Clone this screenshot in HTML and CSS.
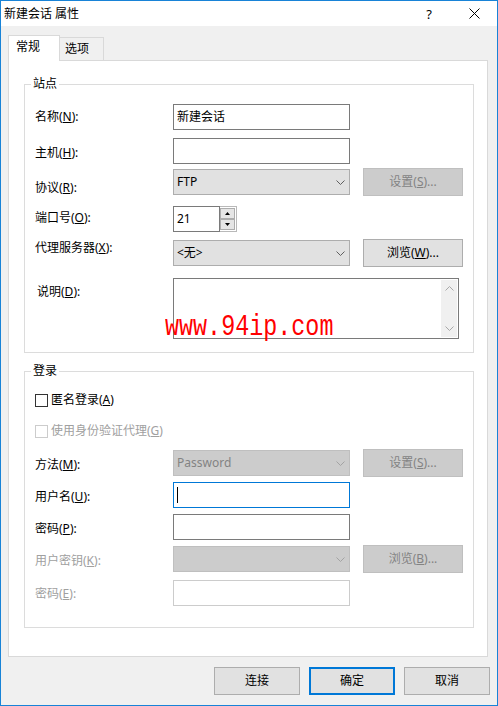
FILE: index.html
```html
<!DOCTYPE html>
<html lang="zh-CN">
<head>
<meta charset="utf-8">
<title>新建会话 属性</title>
<link rel="stylesheet" href="styles.css">
</head>
<body>
<div class="window">
  <div class="titlebar">
    <span class="title">新建会话 属性</span>
    <span class="tb-help">?</span>
    <span class="tb-close"><svg width="11" height="11" viewBox="0 0 11 11"><path d="M0.5 0.5L10.5 10.5M10.5 0.5L0.5 10.5" stroke="#000" stroke-width="1" fill="none"/></svg></span>
  </div>

  <div class="tabs">
    <div class="tab active">常规</div>
    <div class="tab">选项</div>
  </div>

  <div class="panel">
    <section class="group site">
      <div class="group-title"><span>站点</span></div>
      <div class="group-body">
        <div class="row row-name">
          <span class="lbl">名称(<u>N</u>):</span>
          <div class="field">新建会话</div>
        </div>
        <div class="row row-host">
          <span class="lbl">主机(<u>H</u>):</span>
          <div class="field"></div>
        </div>
        <div class="row row-proto">
          <span class="lbl">协议(<u>R</u>):</span>
          <div class="combo"><span>FTP</span><svg class="chev" width="9" height="5" viewBox="0 0 9 5"><path d="M0.5 0.5L4.5 4.5L8.5 0.5" stroke="#5f5f5f" fill="none"/></svg></div>
          <div class="btn disabled">设置(<u>S</u>)...</div>
        </div>
        <div class="row row-port">
          <span class="lbl">端口号(<u>O</u>):</span>
          <div class="spin">
            <div class="spin-text">21</div>
            <div class="spin-btns">
              <div class="spin-btn"><svg width="5" height="3" viewBox="0 0 5 3"><path d="M2.5 0L5 3H0Z" fill="#000"/></svg></div>
              <div class="spin-btn"><svg width="5" height="3" viewBox="0 0 5 3"><path d="M0 0H5L2.5 3Z" fill="#000"/></svg></div>
            </div>
          </div>
        </div>
        <div class="row row-proxy">
          <span class="lbl">代理服务器(<u>X</u>):</span>
          <div class="combo"><span>&lt;无&gt;</span><svg class="chev" width="9" height="5" viewBox="0 0 9 5"><path d="M0.5 0.5L4.5 4.5L8.5 0.5" stroke="#5f5f5f" fill="none"/></svg></div>
          <div class="btn">浏览(<u>W</u>)...</div>
        </div>
        <div class="row row-desc">
          <span class="lbl">说明(<u>D</u>):</span>
          <div class="textarea">
            <div class="vscroll">
              <div class="arrow"><svg width="9" height="5" viewBox="0 0 9 5"><path d="M0.5 4.5L4.5 0.5L8.5 4.5" stroke="#a8a8a8" fill="none"/></svg></div>
              <div class="arrow"><svg width="9" height="5" viewBox="0 0 9 5"><path d="M0.5 0.5L4.5 4.5L8.5 0.5" stroke="#a8a8a8" fill="none"/></svg></div>
            </div>
          </div>
        </div>
      </div>
    </section>

    <section class="group login">
      <div class="group-title"><span>登录</span></div>
      <div class="group-body">
        <div class="check check-anon"><span class="box"></span><span>匿名登录(<u>A</u>)</span></div>
        <div class="check check-proxy disabled"><span class="box"></span><span>使用身份验证代理(<u>G</u>)</span></div>
        <div class="row row-method">
          <span class="lbl">方法(<u>M</u>):</span>
          <div class="combo disabled"><span>Password</span><svg class="chev" width="9" height="5" viewBox="0 0 9 5"><path d="M0.5 0.5L4.5 4.5L8.5 0.5" stroke="#a3a3a3" fill="none"/></svg></div>
          <div class="btn disabled">设置(<u>S</u>)...</div>
        </div>
        <div class="row row-user">
          <span class="lbl">用户名(<u>U</u>):</span>
          <div class="field focus"><span class="caret"></span></div>
        </div>
        <div class="row row-pass">
          <span class="lbl">密码(<u>P</u>):</span>
          <div class="field"></div>
        </div>
        <div class="row row-key">
          <span class="lbl muted">用户密钥(<u>K</u>):</span>
          <div class="combo disabled"><span></span><svg class="chev" width="9" height="5" viewBox="0 0 9 5"><path d="M0.5 0.5L4.5 4.5L8.5 0.5" stroke="#a3a3a3" fill="none"/></svg></div>
          <div class="btn disabled">浏览(<u>B</u>)...</div>
        </div>
        <div class="row row-keypass">
          <span class="lbl muted">密码(<u>E</u>):</span>
          <div class="field disabled"></div>
        </div>
      </div>
    </section>
  </div>

  <div class="footer">
    <div class="btn">连接</div>
    <div class="btn default">确定</div>
    <div class="btn">取消</div>
  </div>

  <div class="watermark">www.94ip.com</div>
</div>
</body>
</html>
```

FILE: styles.css
```css
* { box-sizing: border-box; }
html, body { margin: 0; padding: 0; }
body {
  width: 498px;
  height: 706px;
  font-family: "Noto Sans", "Noto Sans CJK SC", sans-serif;
  font-size: 12px;
  line-height: 16px;
  color: #000;
  background: #fff;
}
u { text-decoration: underline; text-underline-offset: 1px; }

.window {
  position: relative;
  width: 498px;
  height: 706px;
  border: 1px solid #1883d7;
  background: #f0f0f0;
  display: flex;
  flex-direction: column;
  overflow: hidden;
}

.titlebar {
  height: 25px;
  flex-shrink: 0;
  background: #fff;
  display: flex;
  align-items: center;
}
.title { flex: 1; padding-left: 3px; }
.tb-help { width: 44px; text-align: center; font-size: 13px; }
.tb-close {
  width: 46px;
  height: 25px;
  display: flex;
  align-items: center;
  justify-content: center;
}

.tabs {
  height: 34px;
  flex-shrink: 0;
  display: flex;
  align-items: flex-end;
  padding: 9px 0 0 7px;
}
.tab {
  width: 45px;
  height: 23px;
  margin-left: -1px;
  padding: 3px 0 0 5px;
  border: 1px solid #d9d9d9;
  border-bottom: none;
  background: #f0f0f0;
}
.tab.active {
  position: relative;
  z-index: 1;
  width: 52px;
  height: 26px;
  margin-left: 0;
  margin-bottom: -1px;
  padding: 3px 0 0 7px;
  background: #fff;
}

.panel {
  flex-shrink: 0;
  margin: 0 9px 0 7px;
  border: 1px solid #d9d9d9;
  background: #fff;
  padding: 23px 13px 28px 15px;
}

.group { border: 1px solid #dcdcdc; }
.group + .group { margin-top: 18px; }
.group-title { height: 16px; margin: -9px 0 0 6px; }
.group-title span { background: #fff; padding: 0 2px; }
.group-body { padding-left: 10px; }
.site .group-body { padding-top: 11px; padding-bottom: 13px; }
.login .group-body { padding-top: 13px; padding-bottom: 20px; }

.row {
  display: grid;
  grid-template-columns: 125px 177px 100px;
  column-gap: 13px;
  height: 28px;
  align-items: center;
}
.lbl { align-self: start; white-space: nowrap; }
.lbl.muted { color: #a0a0a0; }

.row-name .lbl { margin-top: 6px; }
.row-host { margin-top: 6px; }
.row-host .lbl { margin-top: 8px; }
.row-proto { margin-top: 3px; }
.row-proto .lbl { margin-top: 12px; }
.row-port { margin-top: 9px; }
.row-port .lbl { margin-top: 5px; }
.row-proxy { margin-top: 6px; }
.row-proxy .lbl { margin-top: 1px; }
.row-desc {
  margin-top: 11px;
  height: 61px;
  grid-template-columns: 125px 286px;
}
.row-desc .lbl { margin-top: 6px; margin-left: 2px; }

.row-method { margin-top: 10px; }
.row-user, .row-pass, .row-key { margin-top: 4px; }
.row-keypass { margin-top: 6px; }
.row-method .lbl, .row-user .lbl, .row-pass .lbl, .row-key .lbl { margin-top: 8px; }
.row-keypass .lbl { margin-top: 7px; }

.field {
  height: 26px;
  border: 1px solid #7a7a7a;
  background: #fff;
  padding: 0 3px;
  display: flex;
  align-items: center;
}
.field.focus { border-color: #0078d7; }
.field.disabled { border-color: #cccccc; }
.caret { width: 1px; height: 16px; background: #000; }

.combo {
  height: 26px;
  border: 1px solid #adadad;
  background: #e1e1e1;
  padding: 0 4px 0 3px;
  display: flex;
  align-items: center;
  justify-content: space-between;
}
.combo.disabled { background: #cccccc; border-color: #bfbfbf; color: #838383; }

.btn {
  height: 28px;
  border: 1px solid #adadad;
  background: #e1e1e1;
  display: flex;
  align-items: center;
  justify-content: center;
}
.btn.disabled { background: #cccccc; border-color: #bfbfbf; color: #838383; }
.btn.default { border: 2px solid #0078d7; }

.spin { display: flex; width: 64px; height: 26px; }
.spin-text {
  flex: 1;
  border: 1px solid #7a7a7a;
  padding: 0 3px;
  display: flex;
  align-items: center;
}
.spin-btns {
  width: 17px;
  border: 1px solid #b9b9b9;
  border-left: none;
  padding: 1px 1px 1px 0;
  display: flex;
  flex-direction: column;
}
.spin-btn {
  flex: 1;
  border: 1px solid #adadad;
  background: #e5e5e5;
  display: flex;
  align-items: center;
  justify-content: center;
}

.textarea {
  height: 61px;
  border: 1px solid #7a7a7a;
  background: #fff;
  padding: 1px;
  display: flex;
  justify-content: flex-end;
}
.vscroll {
  width: 16px;
  background: #f0f0f0;
  display: flex;
  flex-direction: column;
  justify-content: space-between;
}
.arrow { height: 17px; display: flex; align-items: center; justify-content: center; }

.check { display: flex; align-items: center; gap: 3px; height: 16px; }
.check-proxy { margin-top: 15px; }
.box { width: 13px; height: 13px; border: 1px solid #333; background: #fff; }
.check.disabled { color: #a0a0a0; }
.check.disabled .box { border-color: #cccccc; }

.footer {
  display: flex;
  justify-content: flex-end;
  gap: 9px;
  padding: 10px 7px 10px 0;
}
.footer .btn { width: 86px; }

.watermark {
  position: absolute;
  left: 164px;
  top: 316px;
  font-family: "Liberation Mono", monospace;
  font-size: 23.4px;
  line-height: 26px;
  color: #ff0000;
  white-space: nowrap;
  transform: scaleY(1.3);
  transform-origin: 0 21px;
}
```
